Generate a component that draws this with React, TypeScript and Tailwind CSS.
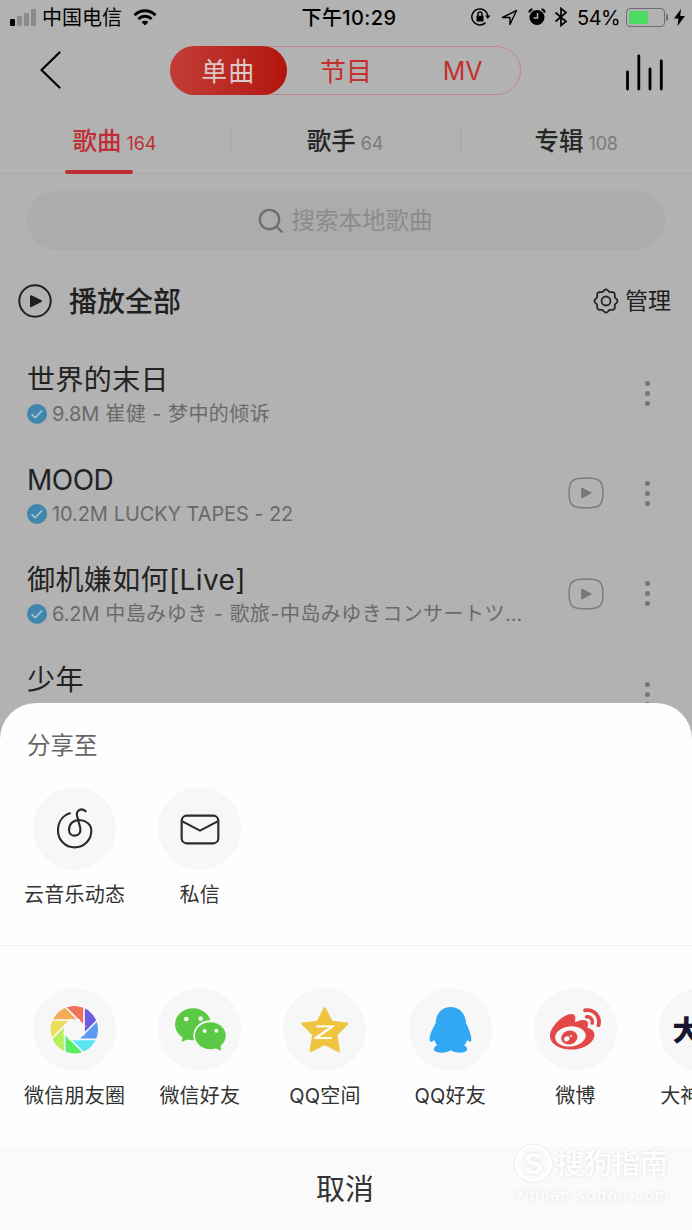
import React from 'react';
import { FaWeibo } from 'react-icons/fa';

interface Song {
    id: string;
    title: string;
    size?: string;
    artist?: string;
    latin?: boolean;
    hasVideo?: boolean;
}

interface ShareTarget {
    id: string;
    label: string;
    icon: React.ReactNode;
}

const songs: Song[] = [
    { id: 'end', title: '世界的末日', size: '9.8M', artist: '崔健 - 梦中的倾诉' },
    { id: 'mood', title: 'MOOD', size: '10.2M', artist: 'LUCKY TAPES - 22', latin: true, hasVideo: true },
    { id: 'live', title: '御机嫌如何[Live]', size: '6.2M', artist: '中島みゆき - 歌旅-中岛みゆきコンサートツ…', hasVideo: true },
    { id: 'youth', title: '少年' },
];

const tabs = [
    { label: '歌曲', count: 164, active: true },
    { label: '歌手', count: 64, active: false },
    { label: '专辑', count: 108, active: false },
];

const bladeColors = ['#6b5ce6', '#5b9bef', '#58e4f0', '#58ee62', '#b4f05c', '#eedd58', '#f4ab55', '#ee7158'];

// Eight soft lobes around the circle
const gearPath = Array.from({ length: 96 }, (_, i) => {
    const a = (i / 96) * Math.PI * 2;
    const r = 10.6 + 0.9 * Math.cos(8 * a);
    return `${i === 0 ? 'M' : 'L'}${(13 + r * Math.sin(a)).toFixed(2)} ${(13 - r * Math.cos(a)).toFixed(2)}`;
}).join('') + 'Z';

const MusicLogo = () => (
    <svg viewBox="0 0 249 249" className="size-full" fill="none" stroke="#2b2b2b" strokeWidth="6.4" strokeLinecap="round">
        <path d="M111 79C88 86 75 106 75 131A50 50 0 0 0 175 131C175 111 158 100 139 99C120 99 108 112 108 128C108 139 115 146 125 146C137 146 144 137 142 124L132 86C129 70 145 61 158 73" />
    </svg>
);

const MailLogo = () => (
    <svg viewBox="0 0 249 249" className="size-full" fill="none" stroke="#2b2b2b" strokeWidth="6.4" strokeLinejoin="round">
        <rect x="71" y="86" width="110" height="83" rx="15" />
        <path d="M73 103L126 131L179 103" />
    </svg>
);

const MomentsLogo = () => (
    <svg viewBox="0 0 249 249" className="size-full">
        <g transform="translate(124 125)">
            {bladeColors.map((color, i) => (
                <path
                    key={color}
                    d="M30 -64.3A71 71 0 0 1 67.5 -22L30 12Z"
                    fill={color}
                    transform={`rotate(${i * 45})`}
                />
            ))}
            {bladeColors.map((color, i) => (
                <path key={color} d="M29 -72V17" stroke="#f7f7f7" strokeWidth="5" transform={`rotate(${i * 45})`} />
            ))}
        </g>
    </svg>
);

const WechatLogo = () => (
    <svg viewBox="0 0 249 249" className="size-full" fill="#5bc944">
        <ellipse cx="105" cy="109" rx="54" ry="48" />
        <path d="M75 140L71 162L98 150Z" />
        <ellipse cx="157" cy="143" rx="51" ry="46" fill="#f7f7f7" />
        <ellipse cx="157" cy="143" rx="46" ry="40.5" />
        <path d="M187 164L189 188L166 178Z" />
        <g fill="#f7f7f7">
            <circle cx="85" cy="93" r="7" />
            <circle cx="128" cy="92" r="7" />
            <circle cx="140" cy="129" r="6" />
            <circle cx="175" cy="128" r="6" />
        </g>
    </svg>
);

const QzoneLogo = () => (
    <svg viewBox="0 0 249 249" className="size-full">
        <path
            d="M125 61L146 102L192 107L160 140L167 189L125 168L83 189L91 140L58 107L104 102Z"
            fill="#efc441"
            stroke="#efc441"
            strokeWidth="7"
            strokeLinejoin="round"
        />
        <g transform="translate(87 153) skewX(-12) scale(1.8 1)">
            <text fontSize="56" fontWeight="500" fill="#fff" fontFamily="Inter, sans-serif">Z</text>
        </g>
    </svg>
);

const QQLogo = () => (
    <svg viewBox="0 0 249 249" className="size-full" fill="#32a8f4">
        <path d="M125 57C99 57 81 76 80 106C73 118 62 138 62 152C62 164 68 164 76 155C78 162 81 168 85 172C69 178 71 194 95 194C109 194 119 192 125 187C131 192 141 194 155 194C179 194 179 178 165 172C169 168 173 162 175 155C182 164 188 164 187 152C186 138 178 118 171 106C170 76 151 57 125 57Z" />
    </svg>
);

const appTargets: ShareTarget[] = [
    { id: 'feed', label: '云音乐动态', icon: <MusicLogo /> },
    { id: 'message', label: '私信', icon: <MailLogo /> },
];

const socialTargets: ShareTarget[] = [
    { id: 'moments', label: '微信朋友圈', icon: <MomentsLogo /> },
    { id: 'wechat', label: '微信好友', icon: <WechatLogo /> },
    { id: 'qzone', label: 'QQ空间', icon: <QzoneLogo /> },
    { id: 'qq', label: 'QQ好友', icon: <QQLogo /> },
    { id: 'weibo', label: '微博', icon: <FaWeibo className="mt-[2px] size-[51px] text-[#e24848]" /> },
    { id: 'dashen', label: '大神圈子', icon: <span className="pt-[2px] text-[28px] font-black text-[#15152f]">大神</span> },
];

const StatusBar = () => (
    <div className="flex h-[34px] shrink-0 items-center pl-[10px] pr-[7px] text-black">
        <div className="flex flex-1 items-center">
            <div className="flex items-end gap-[2px]">
                <span className="h-[7px] w-[5px] rounded-[1px] bg-black" />
                <span className="h-[10px] w-[5px] rounded-[1px] bg-[#8b8b8b]" />
                <span className="h-[13px] w-[5px] rounded-[1px] bg-[#8b8b8b]" />
                <span className="h-[17px] w-[5px] rounded-[1px] bg-[#8b8b8b]" />
            </div>
            <span className="ml-[6px] pt-[2px] text-[20px] leading-none">中国电信</span>
            <svg className="ml-[11px] h-[17px] w-[24px]" viewBox="0 0 24 17" fill="none" stroke="#000" strokeWidth="3">
                <path d="M1.5 6.2C7.5 .3 16.5 .3 22.5 6.2" />
                <path d="M5.4 10C9.2 6.4 14.8 6.4 18.6 10" />
                <path d="M8.5 13L12 16.5L15.5 13C13.5 11.2 10.5 11.2 8.5 13Z" fill="#000" stroke="none" />
            </svg>
        </div>
        <span className="pl-[3px] pt-px text-[20px] font-medium leading-none tracking-[0.4px]">下午10:29</span>
        <div className="flex flex-1 items-center justify-end">
            <svg className="h-[18px] w-[20px]" viewBox="0 0 20 18" fill="none" stroke="#000" strokeWidth="1.5">
                <path d="M16.8 8A8 8 0 1 0 14.5 14.6" />
                <path d="M14.2 7.5H19.5L16.8 11Z" fill="#000" stroke="none" />
                <rect x="5.5" y="7.8" width="7" height="5.6" rx=".6" fill="#000" stroke="none" />
                <path d="M6.9 8V6.2A2.1 2.1 0 0 1 11.1 6.2V8" />
            </svg>
            <svg className="ml-[10px] h-[17px] w-[17px]" viewBox="0 0 17 17" fill="none" stroke="#000" strokeWidth="1.4" strokeLinejoin="round">
                <path d="M15.5 1.5L9 15.5V8.5H1.5Z" />
            </svg>
            <svg className="ml-[10px] h-[18px] w-[18px]" viewBox="0 0 18 18">
                <circle cx="9" cy="9.5" r="7.5" />
                <path d="M1.2 4.5A4 4 0 0 1 4.5 1.3M16.8 4.5A4 4 0 0 0 13.5 1.3" stroke="#000" strokeWidth="2" fill="none" />
                <path d="M9.5 5V10H5.5" stroke="#b2b2b2" strokeWidth="1.5" fill="none" />
            </svg>
            <svg className="ml-[8px] h-[20px] w-[14px]" viewBox="0 0 14 20" fill="none" stroke="#000" strokeWidth="1.7">
                <path d="M1.5 5.5L12 14.5L7 18.5V1.5L12 5.5L1.5 14.5" />
            </svg>
            <span className="ml-[9px] pt-px text-[20px] leading-none tracking-[-0.6px]">54%</span>
            <div className="ml-[6px] h-[19px] w-[39px] rounded-[4px] border-[1.5px] border-[#6c6c6c] p-[2px]">
                <div className="h-full w-[19px] rounded-[1px] bg-[#4cd964]" />
            </div>
            <span className="ml-[1px] h-[7px] w-[2px] rounded-r bg-[#6c6c6c]" />
            <svg className="ml-[6px] h-[17px] w-[11px]" viewBox="0 0 11 17">
                <path d="M7 0L0 9.5H4.5L3.5 17L11 7H6.2Z" />
            </svg>
        </div>
    </div>
);

const NavBar = () => (
    <div className="flex h-[72px] shrink-0 items-center justify-between pl-[39px] pr-[28px]">
        <svg className="h-[38px] w-[24px]" viewBox="0 0 24 38" fill="none" stroke="#000" strokeWidth="2.2" strokeLinecap="round" strokeLinejoin="round">
            <path d="M20.5 1.5L2.5 19L20.5 36.5" />
        </svg>
        <div className="ml-[3px] flex h-[49px] w-[351px] rounded-full border border-[#c38789] text-[26px] text-[#c4302f]">
            <div className="-my-px -ml-px flex w-[117px] items-center justify-center rounded-full bg-linear-to-r from-[#c23c36] to-[#b3120b] pt-[2px] tracking-[1px] text-[#dcc9c8]">单曲</div>
            <div className="flex w-[117px] items-center justify-center pl-[2px] pt-[2px]">节目</div>
            <div className="flex w-[117px] items-center justify-center pl-[2px] pt-[4px] text-[25px]">MV</div>
        </div>
        <svg className="mt-[3px] h-[38px] w-[39px]" viewBox="0 0 39 38" stroke="#000" strokeWidth="2.8" strokeLinecap="round">
            <path d="M2.5 19V36M13.8 3V36M25 16V36M36.3 8V36" />
        </svg>
    </div>
);

const SongRow: React.FC<{ song: Song }> = ({ song }) => (
    <div className="flex h-[100.3px] shrink-0 items-center pl-[27px] pr-[42px]">
        <div className="flex h-full flex-1 flex-col pt-[16.5px]">
            <div className={`text-[28px] leading-[40px] text-[#232323] ${song.latin ? 'tracking-[-0.5px]' : 'tracking-[0.4px]'}`}>{song.title}</div>
            {song.artist && (
                <div className="flex items-center text-[20px] leading-[28px] text-[#6a6a6a]">
                    <svg className="mr-[5px] size-[20px]" viewBox="0 0 20 20" fill="none">
                        <circle cx="10" cy="10" r="10" fill="#4087ae" />
                        <path d="M4.5 10.2L8.3 13.8L15 6.5" stroke="#b8c6ce" strokeWidth="1.5" />
                    </svg>
                    <span className="mr-[6px] tracking-[-0.1px]">{song.size}</span>
                    <span className={`whitespace-nowrap ${song.latin ? 'tracking-[-0.1px]' : 'tracking-[0.45px]'}`}>{song.artist}</span>
                </div>
            )}
        </div>
        {song.hasVideo && (
            <svg className="mr-[41px] h-[32px] w-[36px]" viewBox="0 0 36 32" fill="none">
                <path d="M18 1C31 1 35 3 35 16S31 31 18 31S1 29 1 16S5 1 18 1Z" stroke="#7c7c7c" strokeWidth="1.5" />
                <path d="M13.8 11V21L23.2 16Z" fill="#777" stroke="#777" strokeLinejoin="round" />
            </svg>
        )}
        <div className="flex flex-col gap-[5px]">
            <span className="size-[5px] rounded-full bg-[#777]" />
            <span className="size-[5px] rounded-full bg-[#777]" />
            <span className="size-[5px] rounded-full bg-[#777]" />
        </div>
    </div>
);

const ShareRow: React.FC<{ targets: ShareTarget[] }> = ({ targets }) => (
    <div className="flex pl-[12px]">
        {targets.map(target => (
            <div key={target.id} className="flex w-[125.2px] shrink-0 flex-col items-center">
                <div className="flex size-[83px] items-center justify-center overflow-hidden rounded-full bg-[#f7f7f7]">{target.icon}</div>
                <span className="mt-[11px] whitespace-nowrap text-[20px] leading-[28px] tracking-[0.2px] text-[#333]">{target.label}</span>
            </div>
        ))}
    </div>
);

const App: React.FC = () => (
    <div className="relative h-[1230px] w-[692px] overflow-hidden bg-[#b2b2b2] font-['Inter','Noto_Sans_CJK_SC',sans-serif]">
        <div className="flex h-[703px] flex-col overflow-hidden">
            <StatusBar />
            <NavBar />

            {/* Library tabs */}
            <div className="flex h-[68px] shrink-0 items-center border-b border-[#a8a8a8]">
                {tabs.map((tab, i) => (
                    <div key={tab.label} className="flex h-full flex-1 items-center">
                        <div className={`flex h-full flex-1 items-center justify-center gap-[5px] pr-[1px] ${tab.active ? 'text-[#bf2e34]' : 'text-[#262626]'}`}>
                            <span className="relative flex h-full items-center pt-[4px] text-[24.5px] font-medium">
                                {tab.label}
                                {tab.active && <span className="absolute -bottom-px -left-[8px] h-[4px] w-[68px] rounded-full bg-[#bf2e34]" />}
                            </span>
                            <span className={`pt-[8px] text-[18px] tracking-[-0.2px] ${tab.active ? '' : 'text-[#7b7b7b]'}`}>{tab.count}</span>
                        </div>
                        {i < tabs.length - 1 && <span className="h-[27px] w-px bg-[#a5a5a5]" />}
                    </div>
                ))}
            </div>

            <div className="mx-[27px] mt-[17px] flex h-[59px] shrink-0 items-center justify-center gap-[8px] rounded-full bg-[#acacac] pr-[2px]">
                <svg className="size-[26px]" viewBox="0 0 26 26" fill="none" stroke="#6d6d6d" strokeWidth="2.2">
                    <circle cx="11.5" cy="11.5" r="9.7" />
                    <path d="M18.5 18.5L24.5 24.5" />
                </svg>
                <span className="pt-px text-[23.5px] text-[#8b8b8b]">搜索本地歌曲</span>
            </div>

            {/* Play all */}
            <div className="flex h-[93px] shrink-0 items-center pl-[18px] pr-[21px] pt-[9px] text-[#202020]">
                <svg className="size-[34px]" viewBox="0 0 34 34" fill="none" stroke="#202020" strokeWidth="2">
                    <circle cx="17" cy="17" r="15.7" />
                    <path d="M13 12.2V22.2L23 17.2Z" fill="#202020" strokeLinejoin="round" />
                </svg>
                <span className="ml-[17px] flex-1 pt-[2px] text-[28px] font-medium">播放全部</span>
                <svg className="size-[26px]" viewBox="0 0 26 26" fill="none" stroke="#262626" strokeWidth="1.8">
                    <path d={gearPath} />
                    <circle cx="13" cy="13" r="4.5" />
                </svg>
                <span className="ml-[6px] pt-px text-[23px]">管理</span>
            </div>

            {songs.map(song => <SongRow key={song.id} song={song} />)}
        </div>

        {/* Share sheet */}
        <div className="flex h-[527px] flex-col rounded-t-[36px] bg-[#fefefe]">
            <div className="h-[84px] shrink-0 pl-[27px] pt-[26px] text-[23.5px] leading-[34px] text-[#666]">分享至</div>
            <div className="h-[159px] shrink-0 border-b border-[#f0f0f0]">
                <ShareRow targets={appTargets} />
            </div>
            <div className="h-[200px] shrink-0 overflow-hidden pt-[42px]">
                <ShareRow targets={socialTargets} />
            </div>
            <div className="flex flex-1 items-center justify-center bg-[#fafafa] pr-[2px] pt-[3px] text-[29px] text-[#333]">取消</div>
        </div>

        {/* Watermark */}
        <div className="absolute left-[515px] top-[1143px] w-[160px] text-white [text-shadow:0_0_3px_#dcdcdc]">
            <div className="flex items-center gap-[4px]">
                <div className="flex size-[37px] items-center justify-center rounded-full border-[3px] border-white text-[29px] font-bold leading-none shadow-[0_0_3px_#dcdcdc]">S</div>
                <span className="whitespace-nowrap pt-[3px] text-[28px] font-medium leading-[37px]">搜狗指南</span>
            </div>
            <div className="mt-[3px] text-[15px] font-medium leading-[20px] tracking-[1.4px]">zhinan.sogou.com</div>
        </div>
    </div>
);

export default App;
